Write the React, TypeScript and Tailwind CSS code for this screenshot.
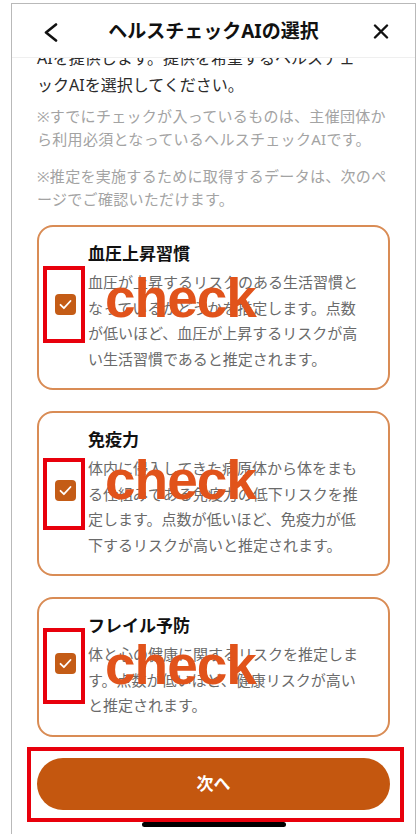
import React from 'react'

type Item = {
  title: string
  desc: string
  checkTop: string
  boxClass: string
}

const items: Item[] = [
  {
    title: '血圧上昇習慣',
    desc: '血圧が上昇するリスクのある生活習慣となっているかどうかを推定します。点数が低いほど、血圧が上昇するリスクが高い生活習慣であると推定されます。',
    checkTop: 'top-[44px]',
    boxClass: '-top-[28px] -bottom-[28px]',
  },
  {
    title: '免疫力',
    desc: '体内に侵入してきた病原体から体をまもる仕組みである免疫力の低下リスクを推定します。点数が低いほど、免疫力が低下するリスクが高いと推定されます。',
    checkTop: 'top-[40px]',
    boxClass: '-top-[22px] -bottom-[29px]',
  },
  {
    title: 'フレイル予防',
    desc: '体と心の健康に関するリスクを推定します。点数が低いほど、健康リスクが高いと推定されます。',
    checkTop: 'top-[39px]',
    boxClass: '-top-[25px] -bottom-[30px]',
  },
]

function CheckBox({ boxClass }: { boxClass: string }) {
  return (
    <div className="relative shrink-0 mb-[7px]">
      <div className="w-[21px] h-[21px] rounded-[4px] bg-[#c45c16] flex items-center justify-center">
        <svg width="21" height="21" viewBox="0 0 21 21" fill="none">
          <path d="M5.5 10.8l3.4 3.4 6.6-7.2" stroke="#fff" strokeWidth="1.8" strokeLinecap="round" strokeLinejoin="round" />
        </svg>
      </div>
      {/* annotation box */}
      <div className={`absolute -left-[12px] -right-[9px] border-[4px] border-[#e8000c] ${boxClass}`} />
    </div>
  )
}

function AiCard({ item }: { item: Item }) {
  return (
    <div className="relative flex items-center gap-[12px] rounded-[16px] border-2 border-[#d98c55] bg-white pl-[16px] pr-[12px] pt-[16px] pb-[16px]">
      <CheckBox boxClass={item.boxClass} />
      <div className="w-[274px]">
        <p className="text-[17px] leading-[22px] font-bold text-[#111]">{item.title}</p>
        <p className="mt-[5px] text-[15px] leading-[25.5px] text-[#6a6a6a]">{item.desc}</p>
      </div>
      {/* annotation text */}
      <span
        className={`absolute left-[66px] ${item.checkTop} font-['Liberation_Sans',Arial,sans-serif] text-[55px] leading-[55px] font-bold tracking-[-1px] text-[#e1531b]`}
      >
        check
      </span>
    </div>
  )
}

export default function App() {
  return (
    <div className="w-[420px] h-[834px] bg-white overflow-hidden font-['Noto_Sans','Noto_Sans_CJK_JP',sans-serif]">
      <div className="ml-[11px] mt-[3px] w-[405px] h-[831px] border-x border-t border-[#b9b9b9] flex flex-col">
        {/* header */}
        <header className="relative z-10 h-[54px] shrink-0 grid grid-cols-[1fr_auto_1fr] items-center border-b border-[#efefef] bg-white">
          <div className="pl-[32px] pt-[3px]">
            <svg width="14" height="19" viewBox="0 0 14 19" fill="none">
              <path d="M12 1.5L2 9.5l10 8" stroke="#111" strokeWidth="2.6" strokeLinecap="round" strokeLinejoin="round" />
            </svg>
          </div>
          <h1 className="text-[19px] leading-[26px] font-bold text-[#111]">ヘルスチェックAIの選択</h1>
          <div className="flex justify-end pr-[26px] pt-[2px]">
            <svg width="16" height="15" viewBox="0 0 16 15" fill="none">
              <path d="M2 1.5l12 12M14 1.5l-12 12" stroke="#111" strokeWidth="2.4" strokeLinecap="round" />
            </svg>
          </div>
        </header>

        {/* scroll area */}
        <main className="flex-1 min-h-0 overflow-hidden px-[25px]">
          <p className="-mt-[13px] text-[16px] leading-[27px] text-[#2b2b2b]">
            AIを提供します。提供を希望するヘルスチェ
            <br />
            ックAIを選択してください。
          </p>
          <p className="mt-[6px] text-[15px] leading-[23px] tracking-[0.3px] text-[#a3a3a3]">
            ※すでにチェックが入っているものは、主催団体から利用必須となっているヘルスチェックAIです。
          </p>
          <p className="mt-[14px] text-[15px] leading-[23px] tracking-[0.3px] text-[#a3a3a3]">
            ※推定を実施するために取得するデータは、次のページでご確認いただけます。
          </p>
          <div className="mt-[14px] flex flex-col gap-[21px]">
            {items.map((it) => (
              <AiCard key={it.title} item={it} />
            ))}
          </div>
        </main>

        {/* footer */}
        <footer className="shrink-0 h-[97px] px-[25px] pt-[21px] bg-white">
          <div className="relative">
            <button className="w-full h-[52px] rounded-full bg-[#c4570f] text-white text-[17px] font-bold">
              次へ
            </button>
            <div className="absolute -left-[10px] -right-[14px] -top-[11px] -bottom-[12px] border-[4px] border-[#e8000c]" />
          </div>
          <div className="mx-auto mt-[12px] w-[144px] h-[5px] rounded-full bg-black" />
        </footer>
      </div>
    </div>
  )
}
